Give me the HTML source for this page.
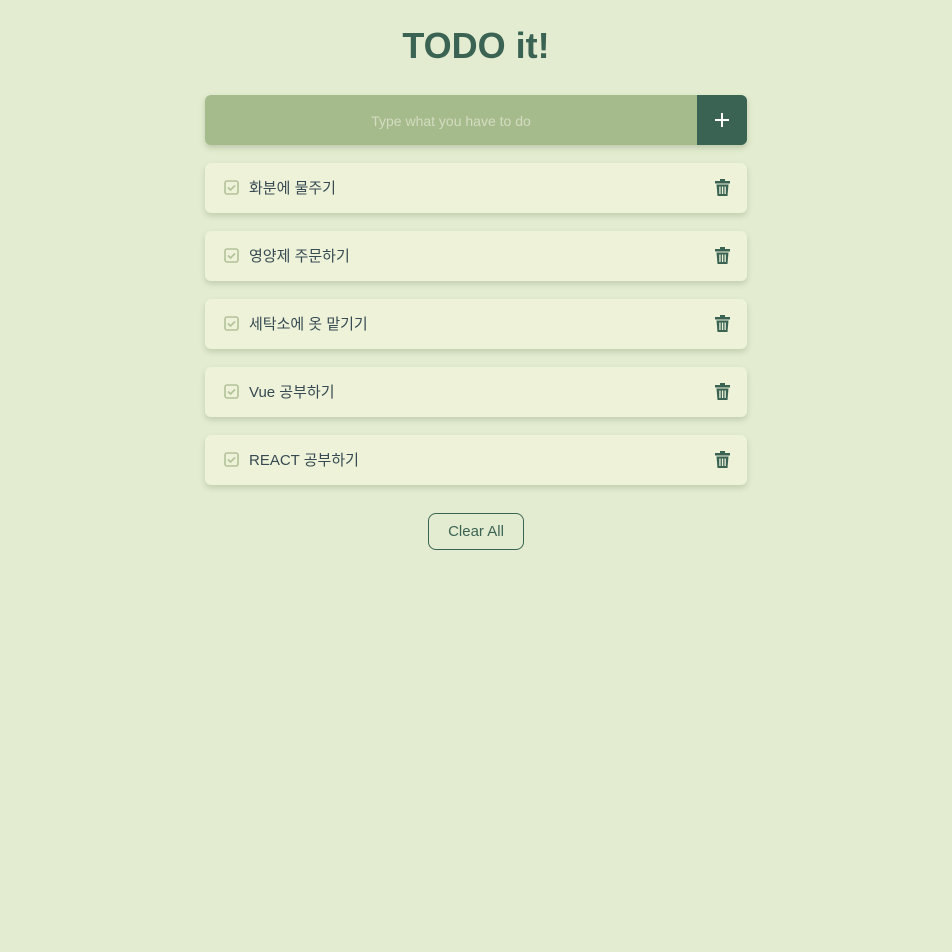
<!DOCTYPE html>
<html><head><meta charset="utf-8"><style>
body{margin:0;width:952px;height:952px;background:#e3ecd0;font-family:"Liberation Sans","Noto Sans CJK KR",sans-serif;position:relative;overflow:hidden}
h1{position:absolute;top:24px;left:0;width:952px;margin:0;text-align:center;font-size:36px;font-weight:bold;color:#3b6354;letter-spacing:0px;font-family:"Liberation Sans",sans-serif;line-height:44px}
.inp{position:absolute;left:205px;top:95px;width:542px;height:50px;border-radius:6px;background:#a5bb8c;box-shadow:0 3px 6px rgba(80,100,60,.25);overflow:hidden}
.inp span{position:absolute;left:0;width:492px;top:1px;line-height:50px;text-align:center;color:#d3dcc0;font-size:14px}
.inp b{position:absolute;right:0;top:0;width:50px;height:50px;background:#3b6354}
.inp b:before{content:"";position:absolute;left:18px;top:24px;width:14px;height:2px;background:#fff}
.inp b:after{content:"";position:absolute;left:24px;top:18px;width:2px;height:14px;background:#fff}
.item{position:absolute;left:205px;width:542px;height:50px;border-radius:6px;background:#edf2d8;box-shadow:0 3px 6px rgba(80,100,60,.22)}
.item .cb{position:absolute;left:19px;top:17px}
.item .t{position:absolute;left:44px;top:2px;line-height:48px;font-size:15px;color:#374a53}
.item .tr{position:absolute;left:510px;top:16px}
.clr{position:absolute;left:428px;top:513px;width:94px;height:35px;border:1px solid #3b6354;border-radius:8px;text-align:center;line-height:36px;color:#3b6354;font-size:15px}
</style></head><body>
<h1>TODO it!</h1>
<div class="inp"><span>Type what you have to do</span><b></b></div>
<div class="item" style="top:163px"><svg class="cb" width="15" height="15" viewBox="0 0 15 15"><rect x="1" y="1" width="13" height="13" rx="2" fill="none" stroke="#b3c29a" stroke-width="1.6"/><path d="M4 7.5l2.5 2.5 4.5-4.5" fill="none" stroke="#b3c29a" stroke-width="1.6"/></svg><div class="t">화분에 물주기</div><svg class="tr" width="15" height="17" viewBox="0 0 15 17"><rect x="0" y="2" width="15" height="2.5" fill="#3b6354"/><rect x="5" y="0" width="5" height="2.5" fill="#3b6354"/><path d="M1.5 5.5h12l-1 11.5h-10z" fill="#3b6354"/><rect x="4.3" y="7.5" width="1.3" height="7.5" fill="#edf2d8"/><rect x="6.9" y="7.5" width="1.3" height="7.5" fill="#edf2d8"/><rect x="9.5" y="7.5" width="1.3" height="7.5" fill="#edf2d8"/></svg></div>
<div class="item" style="top:231px"><svg class="cb" width="15" height="15" viewBox="0 0 15 15"><rect x="1" y="1" width="13" height="13" rx="2" fill="none" stroke="#b3c29a" stroke-width="1.6"/><path d="M4 7.5l2.5 2.5 4.5-4.5" fill="none" stroke="#b3c29a" stroke-width="1.6"/></svg><div class="t">영양제 주문하기</div><svg class="tr" width="15" height="17" viewBox="0 0 15 17"><rect x="0" y="2" width="15" height="2.5" fill="#3b6354"/><rect x="5" y="0" width="5" height="2.5" fill="#3b6354"/><path d="M1.5 5.5h12l-1 11.5h-10z" fill="#3b6354"/><rect x="4.3" y="7.5" width="1.3" height="7.5" fill="#edf2d8"/><rect x="6.9" y="7.5" width="1.3" height="7.5" fill="#edf2d8"/><rect x="9.5" y="7.5" width="1.3" height="7.5" fill="#edf2d8"/></svg></div>
<div class="item" style="top:299px"><svg class="cb" width="15" height="15" viewBox="0 0 15 15"><rect x="1" y="1" width="13" height="13" rx="2" fill="none" stroke="#b3c29a" stroke-width="1.6"/><path d="M4 7.5l2.5 2.5 4.5-4.5" fill="none" stroke="#b3c29a" stroke-width="1.6"/></svg><div class="t">세탁소에 옷 맡기기</div><svg class="tr" width="15" height="17" viewBox="0 0 15 17"><rect x="0" y="2" width="15" height="2.5" fill="#3b6354"/><rect x="5" y="0" width="5" height="2.5" fill="#3b6354"/><path d="M1.5 5.5h12l-1 11.5h-10z" fill="#3b6354"/><rect x="4.3" y="7.5" width="1.3" height="7.5" fill="#edf2d8"/><rect x="6.9" y="7.5" width="1.3" height="7.5" fill="#edf2d8"/><rect x="9.5" y="7.5" width="1.3" height="7.5" fill="#edf2d8"/></svg></div>
<div class="item" style="top:367px"><svg class="cb" width="15" height="15" viewBox="0 0 15 15"><rect x="1" y="1" width="13" height="13" rx="2" fill="none" stroke="#b3c29a" stroke-width="1.6"/><path d="M4 7.5l2.5 2.5 4.5-4.5" fill="none" stroke="#b3c29a" stroke-width="1.6"/></svg><div class="t">Vue 공부하기</div><svg class="tr" width="15" height="17" viewBox="0 0 15 17"><rect x="0" y="2" width="15" height="2.5" fill="#3b6354"/><rect x="5" y="0" width="5" height="2.5" fill="#3b6354"/><path d="M1.5 5.5h12l-1 11.5h-10z" fill="#3b6354"/><rect x="4.3" y="7.5" width="1.3" height="7.5" fill="#edf2d8"/><rect x="6.9" y="7.5" width="1.3" height="7.5" fill="#edf2d8"/><rect x="9.5" y="7.5" width="1.3" height="7.5" fill="#edf2d8"/></svg></div>
<div class="item" style="top:435px"><svg class="cb" width="15" height="15" viewBox="0 0 15 15"><rect x="1" y="1" width="13" height="13" rx="2" fill="none" stroke="#b3c29a" stroke-width="1.6"/><path d="M4 7.5l2.5 2.5 4.5-4.5" fill="none" stroke="#b3c29a" stroke-width="1.6"/></svg><div class="t">REACT 공부하기</div><svg class="tr" width="15" height="17" viewBox="0 0 15 17"><rect x="0" y="2" width="15" height="2.5" fill="#3b6354"/><rect x="5" y="0" width="5" height="2.5" fill="#3b6354"/><path d="M1.5 5.5h12l-1 11.5h-10z" fill="#3b6354"/><rect x="4.3" y="7.5" width="1.3" height="7.5" fill="#edf2d8"/><rect x="6.9" y="7.5" width="1.3" height="7.5" fill="#edf2d8"/><rect x="9.5" y="7.5" width="1.3" height="7.5" fill="#edf2d8"/></svg></div>
<div class="clr">Clear All</div>
</body></html>
